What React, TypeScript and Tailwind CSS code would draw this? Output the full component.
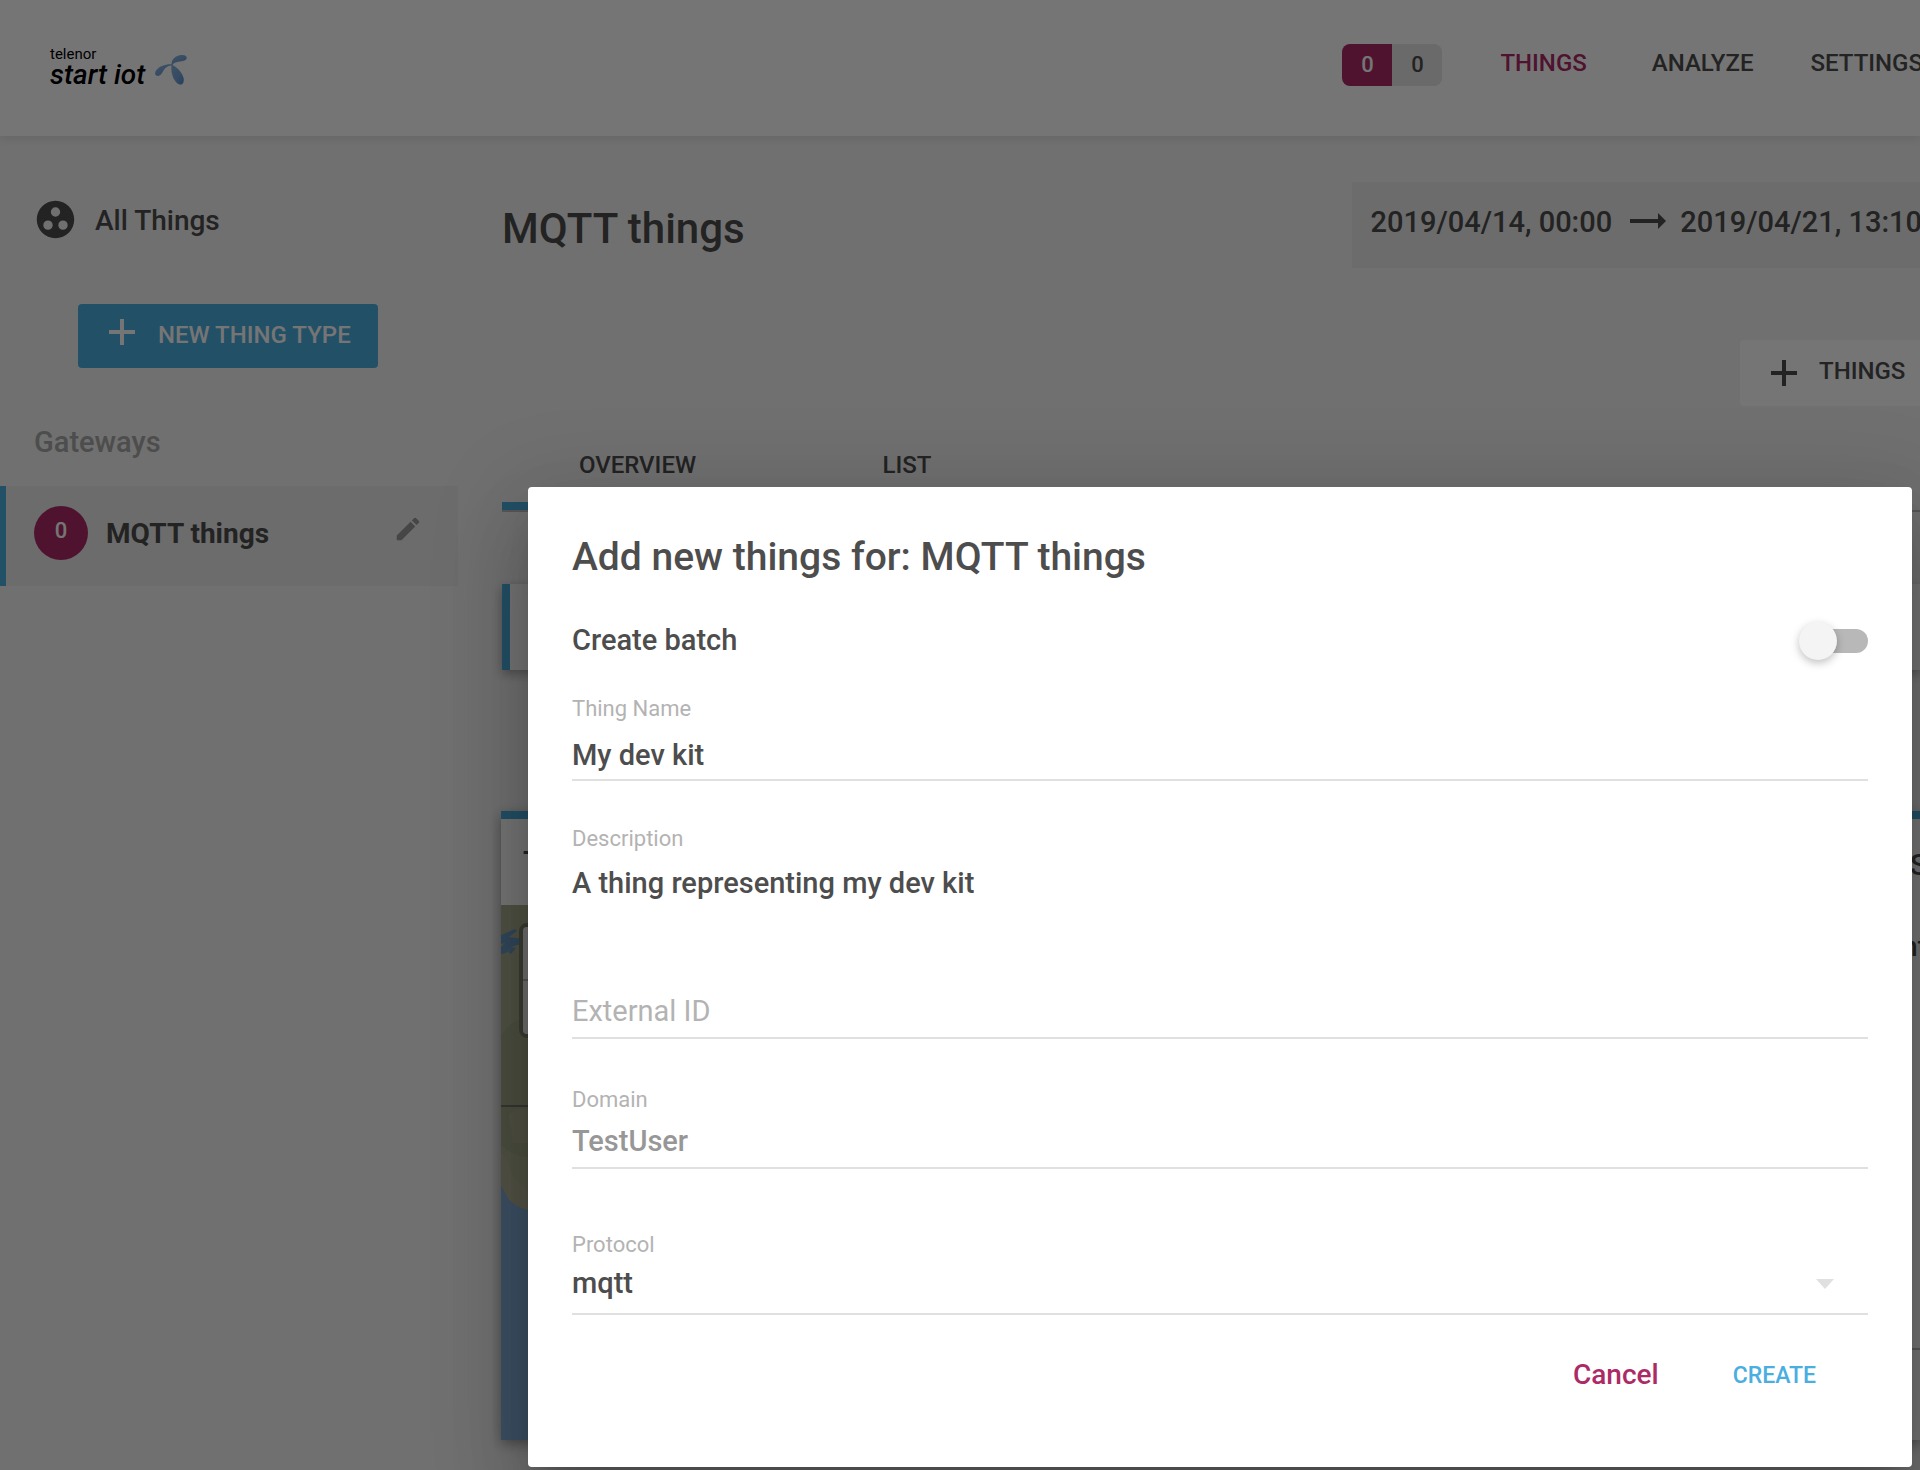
import React from "react";
import { MdEdit, MdGroupWork } from "react-icons/md";

function PlusIcon({ className }: { className: string }) {
  return (
    <svg viewBox="0 0 26 26" className={className} aria-hidden="true">
      <path d="M11 0h4v11h11v4H15v11h-4V15H0v-4h11z" fill="currentColor" />
    </svg>
  );
}

function Propeller() {
  return (
    <svg viewBox="0 0 32 30" className="h-[30px] w-8" aria-hidden="true">
      <defs>
        <linearGradient id="blade" x1="0" y1="0" x2="1" y2="1">
          <stop offset="0" stopColor="#86b3e0" />
          <stop offset="0.55" stopColor="#78a6d8" />
          <stop offset="1" stopColor="#568bc6" />
        </linearGradient>
      </defs>
      <path d="M16.500 10C16.200 4.500 20.500 0.600 26.500 0.100C30 -0.200 32.200 1.500 31.700 3.200C31 6.200 26 6.300 22.500 6.900C19.500 7.500 18 8.500 17.500 10Z" fill="url(#blade)" />
      <path d="M17.500 9.300C10.500 8.800 4 11.300 1 15.500C-0.700 18 0 20.600 2.300 20.900C5.800 21.300 7 18 9 14.800C10.900 12 13.500 10.300 17.500 10.500Z" fill="url(#blade)" />
      <path d="M16.500 9.500C21.500 11.800 27.500 17.500 28.600 23.300C29.300 27.500 27.600 30 25 29.600C20.500 28.900 15.200 20.500 16.500 9.500Z" fill="url(#blade)" />
    </svg>
  );
}

function Header() {
  return (
    <header className="relative z-10 flex h-[136px] items-start justify-between bg-white pl-[50px] shadow-[0_4px_8px_rgba(0,0,0,0.08)]">
      <a href="#home" className="mt-[46px] flex items-start text-black" aria-label="Telenor Start IoT">
        <span className="flex flex-col">
          <span className="text-[15px] leading-4">telenor</span>
          <span className="text-[28px] leading-[26px] font-medium italic">start iot</span>
        </span>
        <span className="mt-[9px] ml-[10px]">
          <Propeller />
        </span>
      </a>
      <nav className="-mr-[3px] flex shrink-0 items-start text-2xl leading-[42px] font-medium">
        <span className="mt-[44px] flex h-[42px] overflow-hidden rounded-lg text-[22px]">
          <span className="w-[50px] bg-[#ac2b66] text-center text-white">0</span>
          <span className="w-[50px] bg-[#e6e6e6] text-center">0</span>
        </span>
        <a href="#things" className="mt-[42px] ml-[58px] text-[#ac2b66]">THINGS</a>
        <a href="#analyze" className="mt-[42px] ml-[65px]">ANALYZE</a>
        <a href="#settings" className="mt-[42px] ml-[57px]">SETTINGS</a>
      </nav>
    </header>
  );
}

function Sidebar() {
  return (
    <aside className="flex w-[458px] shrink-0 flex-col pt-[61px]">
      <a href="#all" className="flex items-center gap-[17px] pl-[33px] text-[28px] leading-[42px] font-medium">
        <MdGroupWork className="size-[45px]" />
        <span className="pt-[3px]">All Things</span>
      </a>
      <button className="mt-[62px] ml-[78px] flex h-16 w-[300px] items-center rounded-sm bg-[#4aaee0] pb-[2px] pl-[31px] text-2xl font-medium text-white">
        <PlusIcon className="mr-[23px] mb-[6px] size-[26px]" />
        NEW THING TYPE
      </button>
      <h2 className="mt-[54px] pl-[34px] text-[29px] leading-10 font-medium text-[#a8a8a8]">Gateways</h2>
      <div className="mt-6 flex h-[100px] items-start border-l-[6px] border-[#4aaee0] bg-[#ebebeb] pt-5 pr-[35px] pl-7">
        <span className="size-[54px] rounded-full bg-[#ac2b66] text-center text-[22px] leading-[50px] font-medium text-white">0</span>
        <a href="#mqtt" className="ml-[18px] text-[28px] leading-[56px] font-bold">MQTT things</a>
        <button aria-label="Edit" className="mt-2 ml-auto text-[#999]">
          <MdEdit className="size-[30px]" />
        </button>
      </div>
    </aside>
  );
}

function MapView() {
  return (
    <div className="relative h-[535px] overflow-hidden bg-[#84afda]">
      <svg viewBox="0 0 400 535" className="h-full w-[400px]" aria-hidden="true">
        <path d="M0 0H400V535C250 470 90 340 30 306C18 302 9 298 6 291L0 280Z" fill="#adb392" />
        <path d="M0 130Q30 90 60 140V250Q20 260 0 240Z" fill="#a4ad8a" />
        <path d="M8 210Q16 200 30 206V238H12Z" fill="#b1b092" />
        <path d="M0 248L6 254L12 272L30 290V306C18 302 9 298 6 291L0 280Z" fill="#b8b598" />
        <path d="M0 30L14 24L16 26L8 32L16 33H30V39L16 40L10 42L15 43L10 49L7 47L11 42L5 48L0 49V42L4 38L0 39Z" fill="#6c9cc9" />
        <path d="M0 201H400" stroke="#77796c" strokeWidth="2" />
      </svg>
      <div className="absolute top-[18px] left-[18px] flex h-[115px] w-16 flex-col rounded-lg border-4 border-[#7f8670]">
        <button aria-label="Zoom in" className="h-[54px] rounded-t-sm border-b-2 border-[#bbb] bg-[#f4f4f4]">+</button>
        <button aria-label="Zoom out" className="flex-1 rounded-b-sm bg-[#f4f4f4]">−</button>
      </div>
    </div>
  );
}

function Main() {
  return (
    <main className="min-w-0 flex-1 pt-[46px] pl-11">
      <div className="flex h-[86px] items-center justify-between">
        <h1 className="pt-2 text-[42px] leading-[78px] font-medium">MQTT things</h1>
        <button className="-mr-[22px] flex h-[86px] shrink-0 items-center bg-[#ebebeb] pr-5 pb-1 pl-[18px] text-[29px] font-medium whitespace-nowrap">
          2019/04/14, 00:00
          <svg viewBox="0 0 36 16" className="mr-[14px] mb-1 ml-[18px] h-4 w-9" aria-label="to">
            <path d="M0 6h28V0l8 8-8 8v-6H0z" fill="currentColor" />
          </svg>
          2019/04/21, 13:10
        </button>
      </div>
      <button className="mt-[72px] ml-auto flex h-[66px] w-[180px] items-center rounded-l-sm bg-white pb-1 pl-[31px] text-2xl font-medium">
        <PlusIcon className="mr-[22px] -mb-1 size-[26px]" />
        THINGS
      </button>
      <div role="tablist" className="mt-6 flex h-[82px] border-b-2 border-[#bdbdbd] text-2xl leading-[68px] font-medium">
        <button role="tab" aria-selected="true" className="w-[271px] border-b-8 border-[#4aaee0] pb-[2px]">OVERVIEW</button>
        <button role="tab" aria-selected="false" className="w-[268px] border-b-8 border-transparent pb-[2px]">LIST</button>
      </div>
      <div className="mt-[72px] h-[86px] border-l-8 border-[#4aaee0] bg-white shadow-[0_4px_10px_rgba(0,0,0,0.3)]" />
      <div className="mt-[141px] -ml-px flex gap-8">
        <section className="flex-1 border-t-8 border-[#4aaee0] bg-white shadow-[0_4px_12px_rgba(0,0,0,0.35)]">
          <h3 className="pl-[22px] text-[30px] leading-[86px] font-medium">T</h3>
          <MapView />
        </section>
        <section className="flex w-[600px] flex-col items-end border-t-8 border-[#4aaee0] bg-white shadow-[0_4px_12px_rgba(0,0,0,0.35)]">
          <h3 className="-mr-2 text-[30px] leading-[92px] font-medium">S</h3>
          <p className="-mr-[7px] text-[28px] leading-[72px] font-medium">nt</p>
          <div className="mt-auto h-[92px] w-full border-t-2 border-[#bdbdbd]" />
        </section>
      </div>
    </main>
  );
}

const labelClass = "block text-[22px] leading-7 text-[#b3b3b3]";

function AddThingsDialog() {
  return (
    <form
      role="dialog"
      aria-labelledby="dialog-title"
      onSubmit={(e) => e.preventDefault()}
      className="w-full rounded bg-white px-11 pt-[46px] pb-[68px] text-[29px] font-medium shadow-[0_22px_30px_-14px_rgba(0,0,0,0.2),0_48px_76px_6px_rgba(0,0,0,0.14),0_18px_92px_16px_rgba(0,0,0,0.12)]"
    >
      <h2 id="dialog-title" className="text-[39px] leading-[48px] font-medium">
        Add new things for: MQTT things
      </h2>

      <div className="mt-10 flex h-10 items-center justify-between">
        <label htmlFor="batch">Create batch</label>
        <input
          id="batch"
          type="checkbox"
          role="switch"
          className="relative h-6 w-[68px] appearance-none rounded-full bg-[#b8b8b8] before:absolute before:-top-[7px] before:-left-px before:size-[38px] before:rounded-full before:bg-[#f4f4f4] before:shadow-[0_3px_8px_rgba(0,0,0,0.25)]"
        />
      </div>

      <div className="mt-[34px] font-normal">
        <label htmlFor="name" className={labelClass}>Thing Name</label>
        <input id="name" defaultValue="My dev kit" className="mt-[6px] block h-[52px] w-full border-b-2 border-[#e0e0e0] pt-[2px] font-medium outline-none" />
      </div>

      <div className="mt-11 font-normal">
        <label htmlFor="description" className={labelClass}>Description</label>
        <textarea id="description" defaultValue="A thing representing my dev kit" className="mt-[10px] block h-20 w-full resize-none leading-10 font-medium outline-none" />
      </div>

      <input aria-label="External ID" placeholder="External ID" className="mt-10 block h-14 w-full border-b-2 border-[#e0e0e0] pt-[2px] font-normal outline-none placeholder:text-[#b3b3b3]" />

      <div className="mt-[47px] font-normal">
        <label htmlFor="domain" className={labelClass}>Domain</label>
        <input id="domain" disabled defaultValue="TestUser" className="block h-[55px] w-full border-b-2 border-[#e0e0e0] font-medium text-[#979797] outline-none" />
      </div>

      <div className="mt-[62px] font-normal">
        <label htmlFor="protocol" className={labelClass}>Protocol</label>
        <div className="relative">
          <select id="protocol" defaultValue="mqtt" className="block h-14 w-full appearance-none border-b-2 border-[#e0e0e0] pb-1 font-medium outline-none">
            <option>mqtt</option>
          </select>
          <svg viewBox="0 0 18 10" className="pointer-events-none absolute top-5 right-[34px] h-[10px] w-[18px]" aria-hidden="true">
            <path d="M0 0h18l-9 10z" fill="#e0e0e0" />
          </svg>
        </div>
      </div>

      <div className="mt-9 flex h-12 items-center justify-end gap-[74px] pr-[52px]">
        <button type="button" className="text-[28px] text-[#ac2b66]">Cancel</button>
        <button type="submit" className="pt-[2px] text-[23px] text-[#4aaee0]">CREATE</button>
      </div>
    </form>
  );
}

export default function App() {
  return (
    <div className="relative flex h-screen flex-col overflow-hidden bg-[#f4f4f4] font-[Roboto,sans-serif] text-[#4d4d4d]">
      <Header />
      <div className="flex">
        <Sidebar />
        <Main />
      </div>
      <div className="absolute inset-0 z-20 flex items-start bg-black/54 pt-[487px] pr-2 pl-[528px]">
        <AddThingsDialog />
      </div>
    </div>
  );
}
